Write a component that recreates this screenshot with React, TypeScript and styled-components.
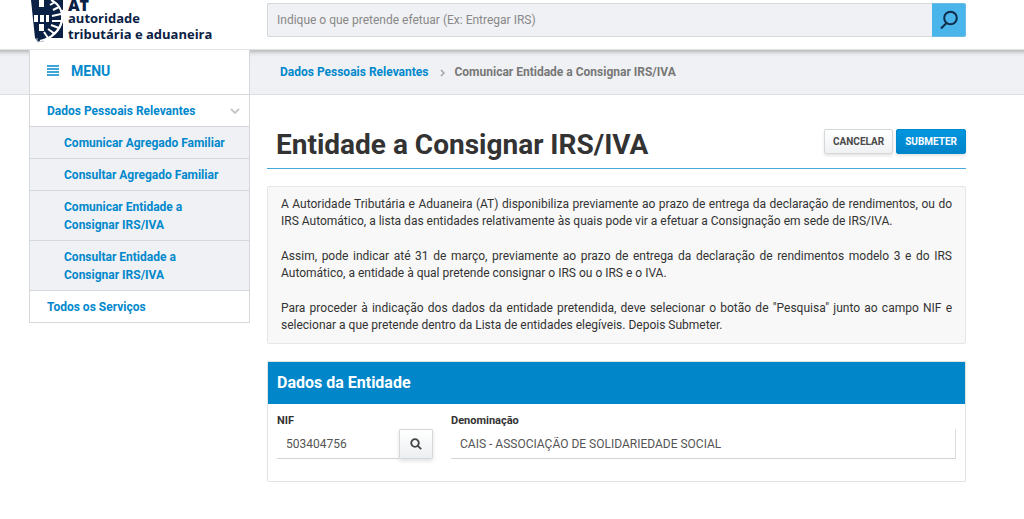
import React from "react";
import styled, { createGlobalStyle } from "styled-components";

const blue = "#0088cc";
const line = "#d5d8da";
const band = "#f0f1f4";

const GlobalStyle = createGlobalStyle`
  *, *::before, *::after { box-sizing: border-box; }
  body { margin: 0; background: #fff; color: #333; font: 12px/17px Roboto, sans-serif; }
  a { text-decoration: none; }
  h1, h2, p, ul, ol { margin: 0; padding: 0; }
  ul, ol { list-style: none; }
  button, input { font-family: inherit; margin: 0; }
`;

const columns = "29px 221px 17px minmax(0, 1fr) 58px";

const Header = styled.header`
  display: grid;
  grid-template-columns: ${columns};
  height: 50px;
  border-bottom: 1px solid #e2e3e5;
  overflow: hidden;
`;

const Logo = styled.a`
  grid-column: 2;
  display: flex;
  gap: 4px;
  padding-left: 1px;
  color: #0a2145;
  height: 43px;
  align-items: flex-end;
  svg { flex: none; }
`;

const LogoText = styled.span`
  display: flex;
  flex-direction: column;
  font: 700 13px/16px "Open Sans", sans-serif;
  white-space: nowrap;
  padding-bottom: 1px;
`;

const LogoMark = styled.strong`
  font-size: 16px;
  line-height: 9px;
  font-weight: 800;
`;

const Search = styled.form`
  grid-column: 4;
  display: flex;
  height: 34px;
  margin-top: 3px;
`;

const SearchInput = styled.input`
  flex: 1;
  min-width: 0;
  height: 34px;
  padding: 0 9px;
  border: 1px solid ${line};
  border-right: 0;
  border-radius: 2px 0 0 2px;
  background: ${band};
  font-size: 12px;
  color: #555;
  outline: none;
  &::placeholder { color: #888; opacity: 1; }
`;

const SearchButton = styled.button`
  width: 34px;
  padding: 0;
  border: 1px solid #6bbbe6;
  border-left: 0;
  border-radius: 0 2px 2px 0;
  background: #4ab5eb;
  color: #0f2c4a;
  display: grid;
  place-items: center;
`;

const Layout = styled.div`
  display: grid;
  grid-template-columns: ${columns};
  grid-template-rows: 45px auto;
`;

const Band = styled.div`
  grid-column: 1 / -1;
  grid-row: 1;
  background: linear-gradient(#b9babc, #cfd0d3 2px, #e6e7ea 4px, ${band} 7px);
  border-bottom: 1px solid #dcdee0;
`;

const Sidebar = styled.nav`
  grid-column: 2;
  grid-row: 1 / 3;
  align-self: start;
  background: #fff;
  border: 1px solid ${line};
  border-top: 0;
  z-index: 1;
  font-weight: 700;
  line-height: 18px;
`;

const MenuTitle = styled.button`
  display: flex;
  align-items: center;
  gap: 12px;
  width: 100%;
  height: 44px;
  padding: 0 17px 3px;
  border: 0;
  background: #fff;
  color: ${blue};
  font-size: 14px;
  font-weight: 700;
`;

const MenuLink = styled.a<{ $sub?: boolean }>`
  display: flex;
  justify-content: space-between;
  align-items: center;
  border-top: 1px solid ${line};
  padding: ${(p) => (p.$sub ? "7px 20px 6px 34px" : "7px 9px 6px 17px")};
  background: ${(p) => (p.$sub ? band : "#fff")};
  color: ${blue};
`;

const Breadcrumb = styled.nav`
  grid-column: 4;
  grid-row: 1;
  padding: 14px 13px 0;
  font-weight: 700;
  color: #777;
  ol { display: flex; align-items: center; }
  li { display: flex; align-items: center; }
  a { color: ${blue}; }
  svg { margin: 0 8px 0 11px; }
`;

const Main = styled.main`
  grid-column: 4;
  grid-row: 2;
  padding-bottom: 37px;
`;

const TitleBar = styled.div`
  display: flex;
  justify-content: space-between;
  align-items: flex-start;
  margin-top: 28px;
  height: 46px;
  padding-left: 9px;
  border-bottom: 1px solid #45aadb;
`;

const Title = styled.h1`
  font-size: 28px;
  line-height: 44px;
  font-weight: 700;
  white-space: nowrap;
`;

const Actions = styled.div`
  display: flex;
  gap: 3px;
  padding-top: 6px;
`;

const Button = styled.button<{ $primary?: boolean }>`
  height: 25px;
  padding: 0 8px;
  border: 1px solid ${(p) => (p.$primary ? "#0088cc" : "#d5d8da")};
  border-radius: 2px;
  background: ${(p) => (p.$primary ? "linear-gradient(#0096df, #0084c9)" : "linear-gradient(#fff, #eff1f3)")};
  color: ${(p) => (p.$primary ? "#fff" : "#4a4a4a")};
  font-size: 10px;
  font-weight: 700;
  box-shadow: 0 2px 3px rgba(0, 0, 0, 0.1);
`;

const Notice = styled.section`
  display: grid;
  gap: 18px;
  margin-top: 17px;
  padding: 9px 13px;
  border: 1px solid #e6e6e6;
  border-radius: 2px;
  background: #f8f8f8;
  text-align: justify;
`;

const Panel = styled.section`
  margin-top: 17px;
  border: 1px solid #e0e2e3;
  border-radius: 2px;
`;

const PanelTitle = styled.h2`
  height: 42px;
  padding: 0 9px;
  background: #0086c9;
  color: #fff;
  font-size: 16px;
  line-height: 41px;
  font-weight: 700;
`;

const Fields = styled.div`
  display: grid;
  grid-template-columns: 156px minmax(0, 1fr);
  gap: 18px;
  padding: 9px 9px 22px;
`;

const Label = styled.label`
  display: block;
  font-size: 11px;
  line-height: 16px;
  font-weight: 700;
`;

const FieldRow = styled.div`
  display: flex;
`;

const Field = styled.input<{ $edge?: boolean }>`
  flex: 1;
  min-width: 0;
  height: 30px;
  padding: 0 9px;
  border: 0;
  border-bottom: 1px solid #d0d4d6;
  border-right: ${(p) => (p.$edge ? "1px solid #dde0e1" : "0")};
  background: #fff;
  color: #555;
  font-size: 12px;
  outline: none;
`;

const LookupButton = styled.button`
  width: 34px;
  height: 30px;
  padding: 0;
  border: 1px solid ${line};
  border-radius: 1px;
  background: linear-gradient(#fff, #eceff1);
  box-shadow: 0 2px 4px rgba(0, 0, 0, 0.12);
  display: grid;
  place-items: center;
  color: #444;
`;

const Emblem = () => (
  <svg width="34" height="43" viewBox="0 0 34 43" aria-hidden="true">
    <path d="M1 0H33V38H17L12 42H8L5 38Z" fill="#0a2145" />
    <path d="M9 0h5v7H9zM4 15h4v7H4zM10 15h4v7h-4zM16 15h3v7h-3zM9 24h5v7H9z" fill="#fff" />
    <g fill="none" stroke="#fff">
      <path d="M21 0C30 4 33 13 32 20C30 31 22 38 10 41" strokeWidth="2" />
      <path d="M20 5l5-3M23 10l6-3M22 16l9-2M22 21h9M21 25l8 3M18 29l7 5M14 32l4 6" strokeWidth="2" />
    </g>
    <path d="M33 2V38H22C29 34 34 26 33 18Z" fill="#0a2145" />
    <path d="M32 10C34 21 30 30 22 35" fill="none" stroke="#fff" strokeWidth="2" />
    <path d="M7 38V42L14 41" fill="none" stroke="#c5cbd5" />
  </svg>
);

const notices = [
  "A Autoridade Tributária e Aduaneira (AT) disponibiliza previamente ao prazo de entrega da declaração de rendimentos, ou do IRS Automático, a lista das entidades relativamente às quais pode vir a efetuar a Consignação em sede de IRS/IVA.",
  "Assim, pode indicar até 31 de março, previamente ao prazo de entrega da declaração de rendimentos modelo 3 e do IRS Automático, a entidade à qual pretende consignar o IRS ou o IRS e o IVA.",
  'Para proceder à indicação dos dados da entidade pretendida, deve selecionar o botão de "Pesquisa" junto ao campo NIF e selecionar a que pretende dentro da Lista de entidades elegíveis. Depois Submeter.',
];

const subItems = [
  "Comunicar Agregado Familiar",
  "Consultar Agregado Familiar",
  "Comunicar Entidade a Consignar IRS/IVA",
  "Consultar Entidade a Consignar IRS/IVA",
];

export default function App() {
  return (
    <>
      <GlobalStyle />
      <Header>
        <Logo href="#">
          <Emblem />
          <LogoText>
            <LogoMark>AT</LogoMark>
            <span>autoridade</span>
            <span>tributária e aduaneira</span>
          </LogoText>
        </Logo>
        <Search role="search" onSubmit={(e) => e.preventDefault()}>
          <SearchInput aria-label="Pesquisar" placeholder="Indique o que pretende efetuar (Ex: Entregar IRS)" />
          <SearchButton aria-label="Pesquisar">
            <svg width="20" height="20" viewBox="0 0 20 20" fill="none" stroke="currentColor" strokeWidth="2">
              <circle cx="11.5" cy="8" r="6.3" />
              <path d="M7.5 13L2 18.5" />
            </svg>
          </SearchButton>
        </Search>
      </Header>
      <Layout>
        <Band />
        <Sidebar aria-label="Menu">
          <MenuTitle>
            <svg width="12" height="11" viewBox="0 0 12 11" fill="none" stroke="currentColor" strokeWidth="1.7">
              <path d="M0 1h12M0 4h12M0 7h12M0 10h12" />
            </svg>
            MENU
          </MenuTitle>
          <ul>
            <li>
              <MenuLink href="#">
                Dados Pessoais Relevantes
                <svg width="10" height="8" viewBox="0 0 10 8" fill="none" stroke="#c3c6c9" strokeWidth="1.8">
                  <path d="M1 2l4 4 4-4" />
                </svg>
              </MenuLink>
              <ul>
                {subItems.map((item) => (
                  <li key={item}>
                    <MenuLink href="#" $sub>{item}</MenuLink>
                  </li>
                ))}
              </ul>
            </li>
            <li>
              <MenuLink href="#">Todos os Serviços</MenuLink>
            </li>
          </ul>
        </Sidebar>
        <Breadcrumb aria-label="Localização">
          <ol>
            <li><a href="#">Dados Pessoais Relevantes</a></li>
            <li>
              <svg width="7" height="8" viewBox="0 0 7 8" fill="none" stroke="#999" strokeWidth="1.2">
                <path d="M2 1l3 3-3 3" />
              </svg>
              Comunicar Entidade a Consignar IRS/IVA
            </li>
          </ol>
        </Breadcrumb>
        <Main>
          <TitleBar>
            <Title>Entidade a Consignar IRS/IVA</Title>
            <Actions>
              <Button type="button">CANCELAR</Button>
              <Button type="button" $primary>SUBMETER</Button>
            </Actions>
          </TitleBar>
          <Notice>
            {notices.map((text) => <p key={text}>{text}</p>)}
          </Notice>
          <Panel>
            <PanelTitle>Dados da Entidade</PanelTitle>
            <Fields>
              <div>
                <Label htmlFor="nif">NIF</Label>
                <FieldRow>
                  <Field id="nif" defaultValue="503404756" />
                  <LookupButton type="button" aria-label="Pesquisa">
                    <svg width="12" height="12" viewBox="0 0 12 12" fill="none" stroke="currentColor" strokeWidth="1.8">
                      <circle cx="5" cy="5" r="3.8" />
                      <path d="M7.8 7.8l3.4 3.4" />
                    </svg>
                  </LookupButton>
                </FieldRow>
              </div>
              <div>
                <Label htmlFor="name">Denominação</Label>
                <FieldRow>
                  <Field id="name" $edge defaultValue="CAIS - ASSOCIAÇÃO DE SOLIDARIEDADE SOCIAL" />
                </FieldRow>
              </div>
            </Fields>
          </Panel>
        </Main>
      </Layout>
    </>
  );
}
